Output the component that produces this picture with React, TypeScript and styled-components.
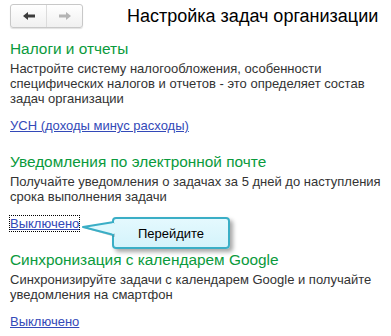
import React from 'react';
import styled, { createGlobalStyle } from 'styled-components';

const Global = createGlobalStyle`
  body { margin: 0; background: #fff; font-family: Arial, "Liberation Sans", sans-serif; }
`;

const sections = [
  {
    title: 'Налоги и отчеты',
    text: 'Настройте систему налогообложения, особенности специфических налогов и отчетов - это определяет состав задач организации',
    link: 'УСН (доходы минус расходы)',
  },
  {
    title: 'Уведомления по электронной почте',
    text: 'Получайте уведомления о задачах за 5 дней до наступления срока выполнения задачи',
    link: 'Выключено',
    hint: 'Перейдите',
  },
  {
    title: 'Синхронизация с календарем Google',
    text: 'Синхронизируйте задачи с календарем Google и получайте уведомления на смартфон',
    link: 'Выключено',
  },
];

const Page = styled.div`
  width: 391px;
  height: 336px;
  padding: 4px 10px 0 10px;
  box-sizing: border-box;
  overflow: hidden;
`;

const Header = styled.div`
  display: flex;
  align-items: center;
  height: 24px;
  margin-bottom: 11px;
`;

const NavGroup = styled.div`
  display: flex;
  width: 73px;
  height: 24px;
  border: 1px solid #c8c8c8;
  border-radius: 3px;
  box-sizing: border-box;
  background: linear-gradient(#ffffff, #f0f0f0);
  box-shadow: 0 1px 1px rgba(0, 0, 0, 0.12);
`;

const NavButton = styled.div<{ $last?: boolean }>`
  flex: 1;
  display: flex;
  align-items: center;
  justify-content: center;
  border-left: ${p => (p.$last ? '1px solid #dcdcdc' : 'none')};
`;

const Title = styled.div`
  margin-left: 44px;
  font-size: 18px;
  color: #000;
  white-space: nowrap;
`;

const Section = styled.div`
  & + & {
    margin-top: 19px;
  }
`;

const SectionTitle = styled.div`
  font-size: 15.4px;
  line-height: 19px;
  color: #0a9a3c;
  white-space: nowrap;
`;

const Text = styled.div`
  margin-top: 3px;
  font-size: 13px;
  line-height: 15px;
  color: #333;
`;

const LinkRow = styled.div`
  position: relative;
  margin-top: 12px;
  height: 15px;
  font-size: 13px;
  line-height: 15px;
`;

const Link = styled.a<{ $focus?: boolean }>`
  color: #3349b8;
  text-decoration: underline;
  outline: ${p => (p.$focus ? '1px dotted #000' : 'none')};
  outline-offset: 0;
`;

const Hint = styled.div`
  position: absolute;
  left: 102px;
  top: 1px;
  width: 118px;
  height: 32px;
  box-sizing: border-box;
  border: 2px solid #3aaec6;
  border-radius: 4px;
  background: linear-gradient(#e4f9fe, #d4f3fb);
  box-shadow: 3px 3px 4px rgba(0, 0, 0, 0.35);
  display: flex;
  align-items: center;
  justify-content: center;
  font-size: 13px;
  color: #000;
  z-index: 2;
`;

const Pointer = styled.svg`
  position: absolute;
  left: 72px;
  top: 4px;
  z-index: 3;
  overflow: visible;
`;

const Arrow = ({ dir, color }: { dir: 'l' | 'r'; color: string }) => (
  <svg width="14" height="10" viewBox="0 0 14 10">
    <path
      d={dir === 'l' ? 'M1 5 L6 1 L6 3.5 L13 3.5 L13 6.5 L6 6.5 L6 9 Z' : 'M13 5 L8 1 L8 3.5 L1 3.5 L1 6.5 L8 6.5 L8 9 Z'}
      fill={color}
    />
  </svg>
);

export default function App() {
  return (
    <Page>
      <Global />
      <Header>
        <NavGroup>
          <NavButton><Arrow dir="l" color="#3c3c3c" /></NavButton>
          <NavButton $last><Arrow dir="r" color="#b4b4b4" /></NavButton>
        </NavGroup>
        <Title>Настройка задач организации</Title>
      </Header>
      {sections.map((s, i) => (
        <Section key={i}>
          <SectionTitle>{s.title}</SectionTitle>
          <Text>{s.text}</Text>
          <LinkRow>
            <Link href="#" $focus={!!s.hint}>{s.link}</Link>
            {s.hint && (
              <>
                <Hint>{s.hint}</Hint>
                <Pointer width="36" height="18" viewBox="0 0 36 18">
                  <path d="M33 3 L2 8 L33 17 Z" fill="rgba(0,0,0,0.18)" />
                  <path d="M32 2 L1 7 L32 15 Z" fill="#e0f8fd" />
                  <path d="M32 2 L1 7 L32 15" fill="none" stroke="#3aaec6" strokeWidth="2" strokeLinejoin="round" />
                  <rect x="30" y="3.5" width="3" height="10" fill="#e0f8fd" />
                </Pointer>
              </>
            )}
          </LinkRow>
        </Section>
      ))}
    </Page>
  );
}
